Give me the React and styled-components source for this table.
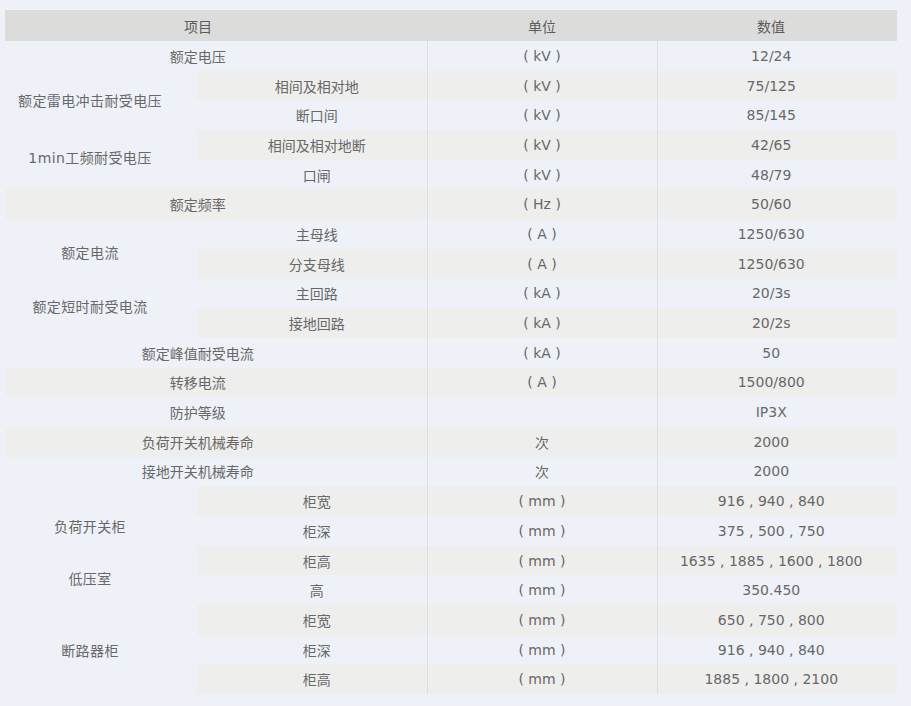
import React from 'react'
import styled, { createGlobalStyle } from 'styled-components'

const GlobalStyle = createGlobalStyle`
  html, body {
    margin: 0;
    background-color: #eef2f8;
  }
`

const Page = styled.div`
  padding: 10px 0 0 5px;
  font-family: "DejaVu Sans", "Noto Sans CJK SC", sans-serif;
  font-size: 14px;
  color: #686868;
`

const SpecTable = styled.table`
  width: 892px;
  border-collapse: collapse;
  table-layout: fixed;
`

const HeadRow = styled.tr`
  height: 31px;
  background-color: #dcdddb;
`

const HeadCell = styled.th`
  padding: 0;
  font-weight: normal;
  color: #5c5c5c;
  text-align: center;
  padding-right: ${p => p.$padRight || 0}px;
`

const Row = styled.tr`
  height: 29.7px;
`

const Cell = styled.td`
  padding: 0;
  text-align: center;
  vertical-align: middle;
  white-space: nowrap;
  background-color: ${p => (p.$striped ? '#eeeeec' : 'transparent')};
  padding-left: ${p => p.$padLeft || 0}px;
  padding-right: ${p => p.$padRight || 0}px;
  border-left: ${p => (p.$divider ? '1px solid #dcdfe4' : 'none')};
`

// group labels sit a little off-centre in the source, $shift nudges them
const GroupCell = styled(Cell)`
  letter-spacing: 0.4px;
  padding-top: ${p => (p.$shift > 0 ? p.$shift * 2 : 0)}px;
  padding-bottom: ${p => (p.$shift < 0 ? -p.$shift * 2 : 0)}px;
`

const specs = [
  { label: '额定电压', unit: '( kV )', value: '12/24' },
  {
    group: '额定雷电冲击耐受电压',
    items: [
      { label: '相间及相对地', unit: '( kV )', value: '75/125' },
      { label: '断口间', unit: '( kV )', value: '85/145' },
    ],
  },
  {
    group: '1min工频耐受电压',
    shift: -3,
    items: [
      { label: '相间及相对地断', unit: '( kV )', value: '42/65' },
      { label: '口闸', unit: '( kV )', value: '48/79' },
    ],
  },
  { label: '额定频率', unit: '( Hz )', value: '50/60' },
  {
    group: '额定电流',
    shift: 3,
    items: [
      { label: '主母线', unit: '( A )', value: '1250/630' },
      { label: '分支母线', unit: '( A )', value: '1250/630' },
    ],
  },
  {
    group: '额定短时耐受电流',
    shift: -2,
    items: [
      { label: '主回路', unit: '( kA )', value: '20/3s' },
      { label: '接地回路', unit: '( kA )', value: '20/2s' },
    ],
  },
  { label: '额定峰值耐受电流', unit: '( kA )', value: '50' },
  { label: '转移电流', unit: '( A )', value: '1500/800' },
  { label: '防护等级', unit: '', value: 'IP3X' },
  { label: '负荷开关机械寿命', unit: '次', value: '2000' },
  { label: '接地开关机械寿命', unit: '次', value: '2000' },
  {
    group: '负荷开关柜',
    shift: 10,
    items: [
      { label: '柜宽', unit: '( mm )', value: '916 , 940 , 840' },
      { label: '柜深', unit: '( mm )', value: '375 , 500 , 750' },
    ],
  },
  {
    group: '低压室',
    shift: 3,
    items: [
      { label: '柜高', unit: '( mm )', value: '1635 , 1885 , 1600 , 1800' },
      { label: '高', unit: '( mm )', value: '350.450' },
    ],
  },
  {
    group: '断路器柜',
    items: [
      { label: '柜宽', unit: '( mm )', value: '650 , 750 , 800' },
      { label: '柜深', unit: '( mm )', value: '916 , 940 , 840' },
      { label: '柜高', unit: '( mm )', value: '1885 , 1800 , 2100' },
    ],
  },
]

function buildRows() {
  const rows = []
  let index = 0
  specs.forEach(spec => {
    if (spec.group) {
      spec.items.forEach((item, i) => {
        index += 1
        const striped = index % 2 === 0
        rows.push(
          <Row key={index}>
            {i === 0 && (
              <GroupCell rowSpan={spec.items.length} $padRight={22} $shift={spec.shift || 0}>
                {spec.group}
              </GroupCell>
            )}
            <Cell $striped={striped} $padLeft={10}>{item.label}</Cell>
            <Cell $striped={striped} $divider>{item.unit}</Cell>
            <Cell $striped={striped} $divider $padRight={12}>{item.value}</Cell>
          </Row>
        )
      })
    } else {
      index += 1
      const striped = index % 2 === 0
      rows.push(
        <Row key={index}>
          <Cell colSpan={2} $striped={striped} $padRight={36}>{spec.label}</Cell>
          <Cell $striped={striped} $divider>{spec.unit}</Cell>
          <Cell $striped={striped} $divider $padRight={12}>{spec.value}</Cell>
        </Row>
      )
    }
  })
  return rows
}

export default function App() {
  return (
    <>
      <GlobalStyle />
      <Page>
        <SpecTable>
          <colgroup>
            <col style={{ width: '192px' }} />
            <col style={{ width: '230px' }} />
            <col style={{ width: '230px' }} />
            <col style={{ width: '240px' }} />
          </colgroup>
          <thead>
            <HeadRow>
              <HeadCell colSpan={2} $padRight={36}>项目</HeadCell>
              <HeadCell>单位</HeadCell>
              <HeadCell $padRight={12}>数值</HeadCell>
            </HeadRow>
          </thead>
          <tbody>{buildRows()}</tbody>
        </SpecTable>
      </Page>
    </>
  )
}
